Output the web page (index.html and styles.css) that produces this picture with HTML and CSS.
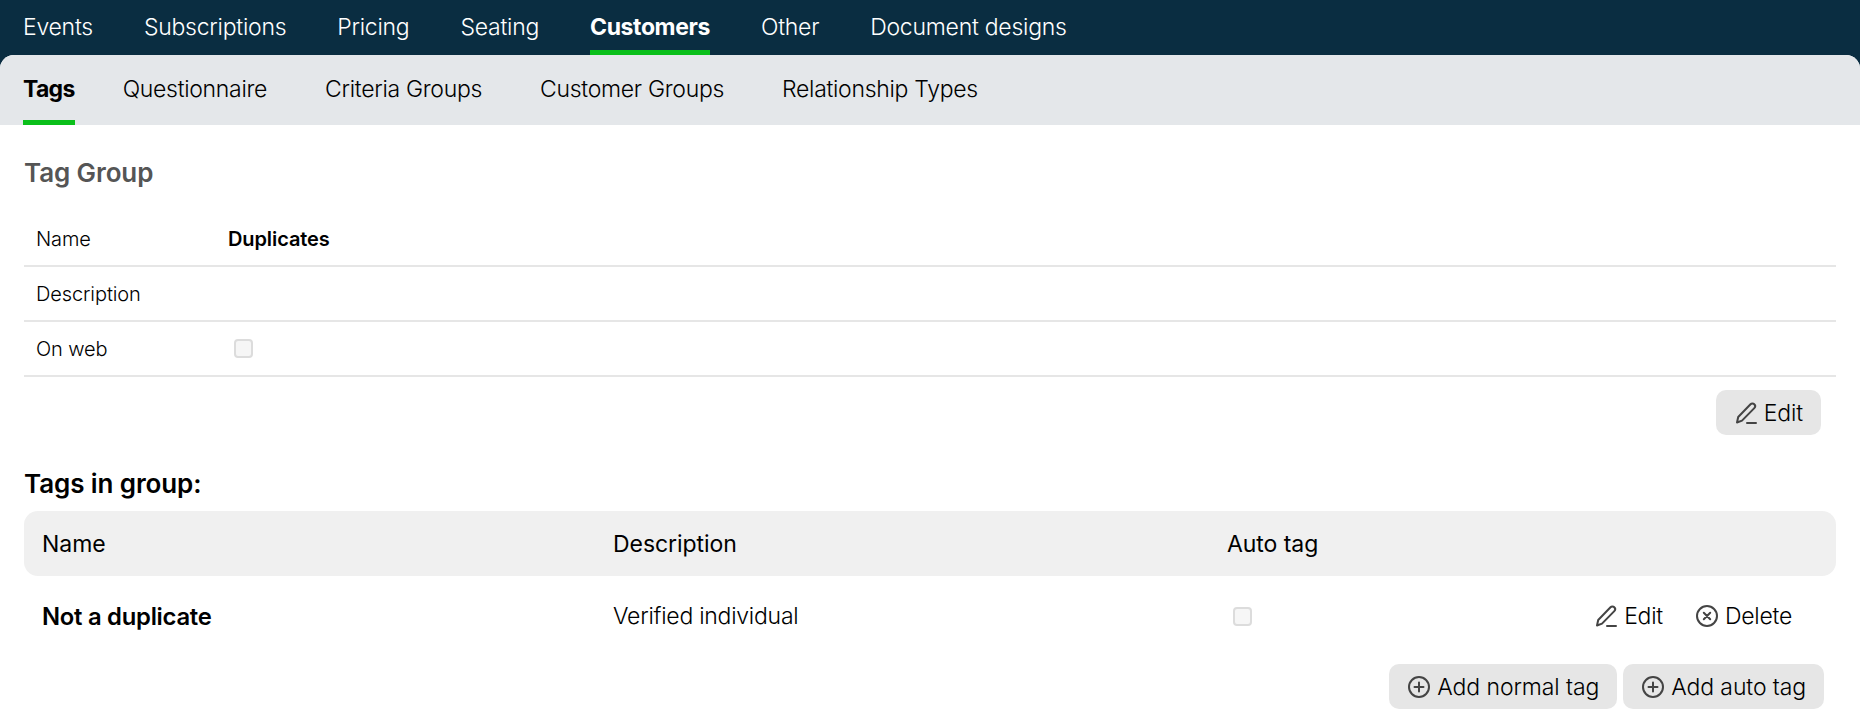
FILE: index.html
```html
<!DOCTYPE html>
<html lang="en">
  <head>
    <meta charset="UTF-8" />
    <meta name="viewport" content="width=device-width, initial-scale=1.0" />
    <link rel="stylesheet" href="styles.css">
    <title>Tags</title>
  </head>
  <body>
    <nav class="main-nav">
      <a>Events</a>
      <a>Subscriptions</a>
      <a>Pricing</a>
      <a>Seating</a>
      <a class="active">Customers</a>
      <a>Other</a>
      <a>Document designs</a>
    </nav>
    <div class="panel">
      <nav class="sub-nav">
        <a class="active">Tags</a>
        <a>Questionnaire</a>
        <a>Criteria Groups</a>
        <a>Customer Groups</a>
        <a>Relationship Types</a>
      </nav>
      <main class="content">
        <h2 class="group-title">Tag Group</h2>
        <div class="info-row">
          <span>Name</span>
          <strong>Duplicates</strong>
        </div>
        <div class="info-row">
          <span>Description</span>
          <span></span>
        </div>
        <div class="info-row">
          <span>On web</span>
          <span><i class="check"></i></span>
        </div>
        <div class="edit-bar">
          <button class="btn">
            <svg class="icon" viewBox="0 0 24 24"><path d="M3 21.5l1.2-5.5L16.5 3.3a2.6 2.6 0 0 1 3.8 0 2.7 2.7 0 0 1 0 3.8L8 19.6z M13 22h9" /></svg>
            Edit
          </button>
        </div>
        <h3 class="tags-title">Tags in group:</h3>
        <div class="tags-head">
          <span>Name</span>
          <span>Description</span>
          <span>Auto tag</span>
        </div>
        <div class="tags-row">
          <strong>Not a duplicate</strong>
          <span>Verified individual</span>
          <span><i class="check small"></i></span>
          <span class="row-actions">
            <a>
              <svg class="icon" viewBox="0 0 24 24"><path d="M3 21.5l1.2-5.5L16.5 3.3a2.6 2.6 0 0 1 3.8 0 2.7 2.7 0 0 1 0 3.8L8 19.6z M13 22h9" /></svg>
              Edit
            </a>
            <a>
              <svg class="icon" viewBox="0 0 24 24"><circle cx="12" cy="12" r="10" /><path d="M8.8 8.8l6.4 6.4 M15.2 8.8l-6.4 6.4" /></svg>
              Delete
            </a>
          </span>
        </div>
        <div class="add-bar">
          <button class="btn">
            <svg class="icon" viewBox="0 0 24 24"><circle cx="12" cy="12" r="10" /><path d="M12 7.5v9 M7.5 12h9" /></svg>
            Add normal tag
          </button>
          <button class="btn">
            <svg class="icon" viewBox="0 0 24 24"><circle cx="12" cy="12" r="10" /><path d="M12 7.5v9 M7.5 12h9" /></svg>
            Add auto tag
          </button>
        </div>
      </main>
    </div>
  </body>
</html>
```

FILE: styles.css
```css
* {
  box-sizing: border-box;
}
body {
  margin: 0;
  background-color: #0a2d41;
  color: #000;
  font-family: "Inter", "Liberation Sans", sans-serif;
  font-size: 20px;
  font-weight: 300;
  letter-spacing: -0.1px;
  overflow: hidden;
}
.main-nav {
  display: flex;
  gap: 51px;
  height: 55px;
  padding-left: 23px;
}
.main-nav a {
  height: 55px;
  padding-top: 13px;
  color: #fff;
  font-size: 23px;
  letter-spacing: -0.25px;
}
.main-nav a.active {
  font-weight: 700;
  letter-spacing: -0.4px;
  border-bottom: 5px solid #0abf1a;
}
.panel {
  height: 668px;
  background-color: #fff;
  border-radius: 14px 14px 0 0;
  overflow: hidden;
}
.sub-nav {
  display: flex;
  gap: 58px;
  height: 70px;
  padding-left: 23px;
  background-color: #e4e7ea;
}
.sub-nav a {
  height: 70px;
  padding-top: 20px;
  font-size: 23px;
  letter-spacing: -0.3px;
}
.sub-nav a.active {
  margin-right: -10px;
  font-weight: 700;
  letter-spacing: -0.7px;
  border-bottom: 5px solid #0abf1a;
}
.content {
  padding: 0 24px;
}
.group-title {
  margin: 32px 0 24px;
  color: #555;
  font-size: 26px;
  font-weight: 600;
}
.info-row {
  display: grid;
  grid-template-columns: 192px 1fr;
  align-items: center;
  height: 55px;
  padding-left: 12px;
  border-bottom: 2px solid #e6e6e6;
}
.info-row strong {
  font-size: 20px;
  font-weight: 600;
}
.check {
  display: block;
  width: 19px;
  height: 19px;
  margin-left: 6px;
  background-color: #f6f6f6;
  border: 2px solid #dcdcdc;
  border-radius: 4px;
}
.edit-bar {
  display: flex;
  justify-content: flex-end;
  padding: 13px 15px 0 0;
}
.btn {
  display: flex;
  align-items: center;
  gap: 6px;
  height: 45px;
  padding: 0 18px;
  background-color: #e6e6e6;
  border: 0;
  border-radius: 10px;
  color: #000;
  font-family: inherit;
  font-size: 23px;
  font-weight: 300;
  letter-spacing: -0.1px;
}
.icon {
  width: 24px;
  height: 24px;
  fill: none;
  stroke: #444;
  stroke-width: 2;
  stroke-linecap: round;
  stroke-linejoin: round;
}
.tags-title {
  margin: 33px 0 12px;
  font-size: 26px;
  font-weight: 600;
}
.tags-head {
  display: grid;
  grid-template-columns: 571px 614px 1fr;
  align-items: center;
  height: 65px;
  padding-left: 18px;
  background-color: #f0f0f0;
  border-radius: 14px;
  font-size: 23px;
  font-weight: 400;
  letter-spacing: -0.05px;
}
.tags-row {
  display: grid;
  grid-template-columns: 571px 614px 1fr auto;
  align-items: center;
  height: 80px;
  padding: 0 44px 0 18px;
  font-size: 23px;
  letter-spacing: -0.25px;
}
.tags-row strong {
  font-size: 23.8px;
  font-weight: 600;
}
.row-actions {
  display: flex;
  gap: 32px;
}
.row-actions a {
  display: flex;
  align-items: center;
  gap: 6px;
}
.add-bar {
  display: flex;
  justify-content: flex-end;
  gap: 6px;
  padding: 8px 12px 0 0;
}
```
